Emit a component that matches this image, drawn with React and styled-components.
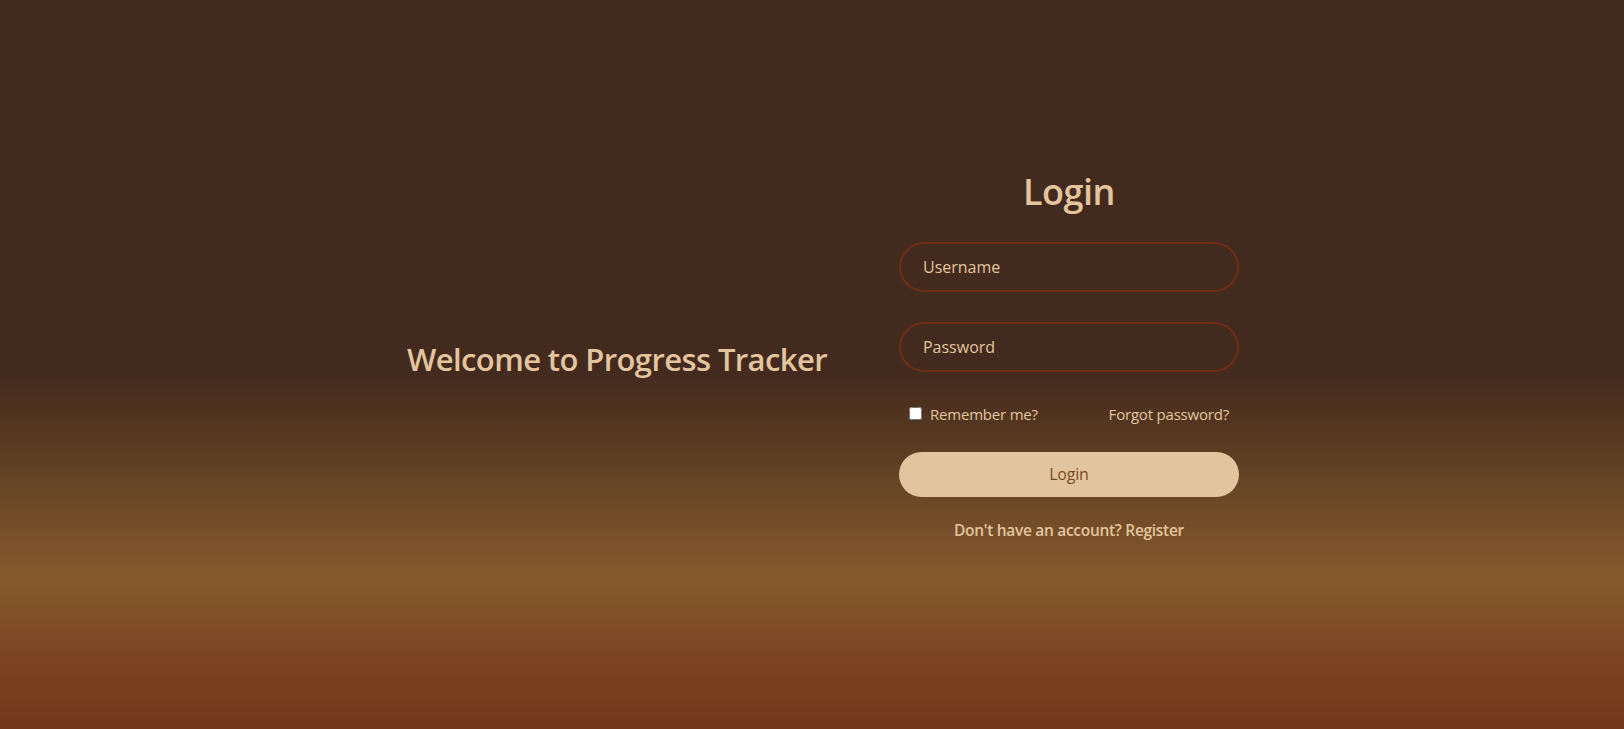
import React from 'react';
import styled, { createGlobalStyle } from 'styled-components';

const GlobalStyle = createGlobalStyle`
  * { box-sizing: border-box; }
  html, body { margin: 0; padding: 0; }
  body {
    font-family: 'Open Sans', 'Noto Sans', sans-serif;
    background: #432a1e;
  }
`;

const Page = styled.div`
  min-height: 729px;
  display: flex;
  align-items: center;
  justify-content: center;
  gap: 72px;
  padding: 0 0 28px 22px;
  background: linear-gradient(
    to bottom,
    #432a1e 0%,
    #432a1e 51%,
    #5c3d22 62%,
    #85592d 79%,
    #7c4522 90%,
    #733719 100%
  );
`;

const Welcome = styled.h1`
  margin: 0;
  padding-top: 16px;
  font-size: 31px;
  font-weight: 600;
  letter-spacing: -0.6px;
  color: #e2c59f;
`;

const Form = styled.form`
  width: 340px;
  margin-top: 6px;
  display: flex;
  flex-direction: column;
  align-items: stretch;
`;

const Title = styled.h2`
  margin: 0 0 26px;
  text-align: center;
  font-size: 36px;
  font-weight: 600;
  letter-spacing: -0.5px;
  color: #e2c59f;
`;

const Field = styled.input`
  height: 50px;
  margin-bottom: ${(p) => p.$gap}px;
  padding: 0 22px;
  border: 2px solid #6c2e17;
  border-radius: 25px;
  background: transparent;
  font-family: inherit;
  font-size: 16px;
  color: #e2c59f;
  outline: none;

  &::placeholder {
    color: #e2c59f;
    opacity: 1;
  }
`;

const OptionsRow = styled.div`
  display: flex;
  align-items: center;
  justify-content: space-between;
  padding: 0 10px;
  margin: 2px 0 28px;
  font-size: 15px;
  color: #e2c59f;
`;

const Remember = styled.label`
  display: flex;
  align-items: center;
  gap: 8px;
  letter-spacing: -0.2px;

  input {
    margin: 0;
    width: 13px;
    height: 13px;
  }
`;

const TextLink = styled.a`
  color: #e2c59f;
  text-decoration: none;
  letter-spacing: -0.2px;
`;

const SubmitButton = styled.button`
  height: 45px;
  border: none;
  border-radius: 23px;
  background: #e2c59f;
  color: #7a4a22;
  font-family: inherit;
  font-size: 16px;
  letter-spacing: -0.2px;
  cursor: pointer;
  margin-bottom: 22px;
`;

const RegisterLine = styled.p`
  margin: 0;
  text-align: center;
  font-size: 15.5px;
  font-weight: 600;
  letter-spacing: -0.3px;
  color: #e2c59f;
`;

export default function App() {
  return (
    <>
      <GlobalStyle />
      <Page>
        <Welcome>Welcome to Progress Tracker</Welcome>
        <Form onSubmit={(e) => e.preventDefault()}>
          <Title>Login</Title>
          <Field type="text" placeholder="Username" $gap={30} />
          <Field type="password" placeholder="Password" $gap={30} />
          <OptionsRow>
            <Remember>
              <input type="checkbox" />
              Remember me?
            </Remember>
            <TextLink href="#">Forgot password?</TextLink>
          </OptionsRow>
          <SubmitButton type="submit">Login</SubmitButton>
          <RegisterLine>Don't have an account? Register</RegisterLine>
        </Form>
      </Page>
    </>
  );
}
